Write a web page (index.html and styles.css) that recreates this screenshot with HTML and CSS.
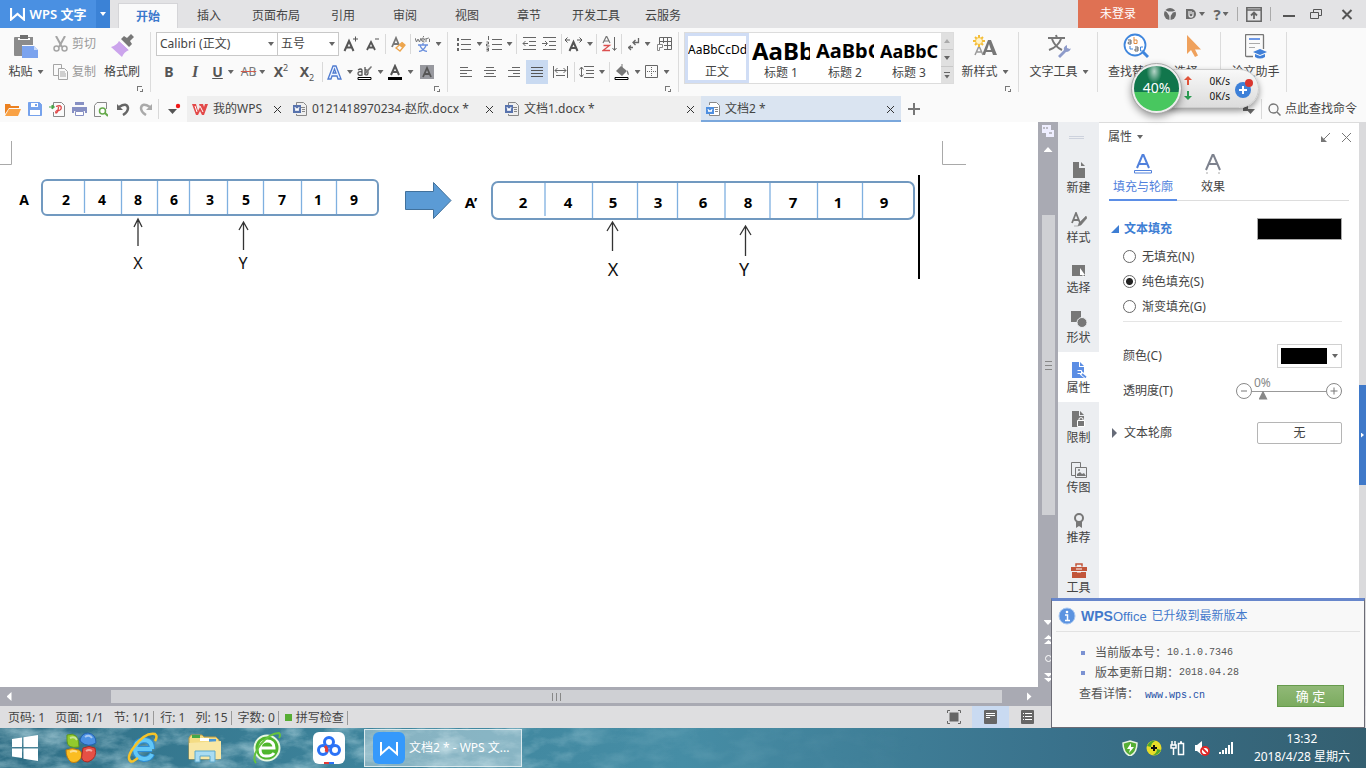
FILE: index.html
```html
<!DOCTYPE html>
<html lang="zh-CN">
<head>
<meta charset="utf-8">
<title>文档2 * - WPS 文字</title>
<link rel="stylesheet" href="styles.css">
</head>
<body>
<header class="titlebar">
  <button class="brand"><svg width="15" height="13" viewBox="0 0 15 13"><path d="M1 0v11.500L7.500 6l6.500 5.500V0" fill="none" stroke="#fff" stroke-width="2.200"/></svg>WPS 文字</button>
  <button class="brand-more" aria-label="菜单"><i class="caret light"></i></button>
  <nav class="menu">
    <a class="active" href="#">开始</a><a href="#">插入</a><a href="#">页面布局</a><a href="#">引用</a><a href="#">审阅</a><a href="#">视图</a><a href="#">章节</a><a href="#">开发工具</a><a href="#">云服务</a>
  </nav>
  <button class="login">未登录</button>
  <div class="window-tools">
    <button class="w24" aria-label="皮肤"><svg width="14" height="14" viewBox="0 0 14 14"><circle cx="7" cy="7" r="6" fill="#6b6b6b"/><path d="M3.500 4.500h7L7 10z" fill="#e3e3e5"/><path d="M1 3l4 2M13 4l-3 1M7 13V9" stroke="#e3e3e5" stroke-width="1.200"/></svg></button>
    <button class="w26" aria-label="文档"><svg width="12" height="12" viewBox="0 0 12 12"><path d="M1 1h5a5 5 0 0 1 0 10H1z" fill="#6b6b6b"/><path d="M4 3v4q0 2 2 2t2-2V4M6 6V3" stroke="#e3e3e5" stroke-width="1.300" fill="none"/></svg><i class="caret"></i></button>
    <button class="w26" aria-label="帮助"><b class="question">?</b><i class="caret"></i></button>
    <i class="vr short"></i>
    <button class="w26" aria-label="折叠"><svg width="16" height="15" viewBox="0 0 16 15"><path d="M.8.800h14.400v13.400H.8zM1 3h14" fill="none" stroke="#666" stroke-width="1.500"/><path d="M8 12V6M5 8.500L8 5.500l3 3" fill="none" stroke="#666" stroke-width="1.800"/></svg></button>
    <i class="vr short"></i>
    <button class="w30" aria-label="最小化"><svg width="12" height="12" viewBox="0 0 12 12"><path d="M0 8h12" stroke="#555" stroke-width="2"/></svg></button>
    <button class="w24" aria-label="还原"><svg width="12" height="10" viewBox="0 0 12 10"><path d="M.5 3.500h8v6h-8zM3.500 3V.5h8v6H9" fill="none" stroke="#555"/></svg></button>
    <button class="close" aria-label="关闭"><svg width="12" height="11" viewBox="0 0 12 11"><path d="M1.500 1l9 9m0-9l-9 9" stroke="#555" stroke-width="2"/></svg></button>
  </div>
</header>

<section class="ribbon" aria-label="开始">
  <div class="group clipboard">
    <div class="cols">
      <button class="big paste"><span><svg width="26" height="24" viewBox="0 0 26 24"><path d="M2 3h5V1h8v2h5v8H9v11H2q-1 0-1-1V4q0-1 1-1z" fill="#8b8b8b"/><path d="M5 4h12v2H5z" fill="#fafafa"/><path d="M7 1h8v4H7z" fill="#707070"/><path d="M9 12h12l4 4v8H9z" fill="#7ba3ee"/><path d="M21 12v4h4" fill="#c7dafa"/></svg></span><em>粘贴<i class="caret"></i></em></button>
      <div class="stack">
        <button class="dim"><svg width="15" height="16" viewBox="0 0 15 16" fill="none" stroke="#a5a5a5"><path d="M3 0l6 11M12 0L6 11" stroke-width="2"/><circle cx="3.500" cy="12.500" r="2.500" stroke-width="1.500"/><circle cx="11.500" cy="12.500" r="2.500" stroke-width="1.500"/></svg>剪切</button>
        <button class="dim"><svg width="15" height="16" viewBox="0 0 15 16" fill="#fafafa" stroke="#a5a5a5"><path d="M.5.500h8v11h-8z"/><path d="M5.500 4.500h6l3 3v8h-9z"/><path d="M7 8h5m-5 2h6m-6 2h6"/></svg>复制</button>
      </div>
      <button class="big painter"><span><svg width="24" height="24" viewBox="0 0 24 24"><path d="M11 5l3-3 3 2 4-4 3 3-4 4 2 3-3 3z" fill="#777"/><path d="M9 7l10 9q-5 2-7 7L1 13q6-2 8-6z" fill="#cba4ec"/><path d="M9.500 6.500l10 9.500" stroke="#fff"/></svg></span><em>格式刷</em></button>
    </div>
    <button class="launcher" aria-label="剪贴板设置"></button>
  </div>

  <div class="group font">
    <div class="row">
      <label class="drop family"><select aria-label="字体"><option>Calibri (正文)</option></select></label><label class="drop size"><select aria-label="字号"><option>五号</option></select></label>
      <button class="w24" aria-label="增大字号"><svg width="16" height="16" viewBox="0 0 16 16"><path d="M1.500 15L6 5l4.500 10M3 11.500h6" fill="none" stroke="#555" stroke-width="2"/><path d="M10 3h5M12.500.5v5" stroke="#555"/></svg></button>
      <button class="w20" aria-label="减小字号"><svg width="16" height="16" viewBox="0 0 16 16"><path d="M2 14l4-8 4 8M3.500 11.500h5" fill="none" stroke="#555" stroke-width="1.800"/><path d="M10 3h4" stroke="#555"/></svg></button>
      <i class="vr"></i>
      <button class="w20" aria-label="清除格式"><svg width="15" height="16" viewBox="0 0 15 16"><path d="M1 11l4-9 3 7M3 8h4" fill="none" stroke="#777" stroke-width="1.800"/><path d="M11 6.500l3 2.500-5 6-4-3z" fill="#fafafa" stroke="#eda54d" stroke-width="1.300"/><path d="M11 6.500l3 2.500-2.500 3-3.500-2.500z" fill="#eda54d"/></svg></button>
      <i class="vr"></i>
      <button class="w30" aria-label="拼音指南"><svg width="16" height="16" viewBox="0 0 16 16"><path d="M0 2l1.500 4L3 3l1.500 3L6 2M6.500 4h3q0-2-1.500-2T6.500 4t3 2M11 6V2m0 1q3-2 3.500 0v3M8 1l1-1" fill="none" stroke="#777"/><path d="M3 9h10M8 7v2M5 9.500q2 5 7 6M11 9.500q-2 5-7 6" fill="none" stroke="#6a8fdd" stroke-width="1.300"/></svg><i class="caret"></i></button>
    </div>
    <div class="row">
      <button class="w26 letter" aria-label="加粗"><b>B</b></button>
      <button class="w26 letter serif" aria-label="倾斜"><b><i>I</i></b></button>
      <button class="w30 letter" aria-label="下划线"><b><u>U</u></b><i class="caret"></i></button>
      <button class="w30 strike" aria-label="删除线"><s>AB</s><i class="caret"></i></button>
      <button class="w26 letter" aria-label="上标"><b>X</b><sup>2</sup></button>
      <button class="w26 letter" aria-label="下标"><b>X</b><sub>2</sub></button>
      <i class="vr"></i>
      <button class="w30" aria-label="文字效果"><svg width="15" height="15" viewBox="0 0 15 15"><path d="M1 14L6 1h3l5 13h-3l-1-3H5l-1 3zM6 8h3L7.500 4z" fill="#eef4ff" stroke="#4f7bd0" stroke-width="1.300"/></svg><i class="caret"></i></button>
      <button class="w30" aria-label="突出显示"><svg width="16" height="15" viewBox="0 0 16 15"><path d="M1 5q3-2 4 0v5q-4 1-4-1.500T5 7M8 2v8m0-5q3-1 3 2.500T8 9.500" fill="none" stroke="#555" stroke-width="1.300"/><path d="M15 2L9 9l-2 1 1-3 6-6z" fill="#777"/><path d="M1 12.500h13v2H1z" fill="#fff" stroke="#000"/></svg><i class="caret"></i></button>
      <button class="w30" aria-label="字体颜色"><svg width="16" height="16" viewBox="0 0 16 16"><path d="M4 11l4-9 4 9M5.500 8h5" fill="none" stroke="#555" stroke-width="2"/><path d="M1 13h14v3H1z"/></svg><i class="caret"></i></button>
      <button class="w24" aria-label="字符底纹"><svg width="14" height="14" viewBox="0 0 14 14"><path d="M0 0h14v14H0z" fill="#98999f"/><path d="M3 12l4-9 4 9M4.500 9h5" fill="none" stroke="#555" stroke-width="1.800"/></svg></button>
    </div>
    <button class="launcher" aria-label="字体设置"></button>
  </div>

  <div class="group para">
    <div class="row">
      <button class="w30" aria-label="项目符号"><svg width="16" height="14" viewBox="0 0 16 14"><path d="M5 2.500h10M5 7.500h10M5 12.500h10" stroke="#666"/><path d="M1 1h2v3H1zM1 6h2v3H1zM1 11h2v3H1z" fill="#666"/></svg><i class="caret"></i></button>
      <button class="w30" aria-label="编号"><svg width="16" height="16" viewBox="0 0 16 16"><path d="M6 3.500h10M6 8.500h10M6 13.500h10M2.500 0v4M.5 6h2v2h-2v2h3M.5 12h2v3h-2m0-1.500h2" stroke="#666" fill="none"/></svg><i class="caret"></i></button>
      <i class="vr"></i>
      <button class="w20" aria-label="减少缩进"><svg width="14" height="14" viewBox="0 0 14 14"><path d="M1 .5h13M7 4.500h7M7 8.500h7M1 12.500h13M1 6.500h5M3.500 4L1 6.500 3.500 9" fill="none" stroke="#666"/></svg></button>
      <button class="w20" aria-label="增加缩进"><svg width="14" height="14" viewBox="0 0 14 14"><path d="M1 .5h13M7 4.500h7M7 8.500h7M1 12.500h13M0 6.500h5M3 4l2.500 2.500L3 9" fill="none" stroke="#666"/></svg></button>
      <i class="vr"></i>
      <button class="w30" aria-label="中文版式"><svg width="17" height="15" viewBox="0 0 17 15"><path d="M4.500 14L8.500 5l4 9M6 11h5" fill="none" stroke="#555" stroke-width="2"/><path d="M0 3h5M12 3h5M2.500.5L0 3l2.500 2.500M14.500.5L17 3l-2.500 2.500" fill="none" stroke="#555"/></svg><i class="caret"></i></button>
      <i class="vr"></i>
      <button class="w20" aria-label="排序"><svg width="15" height="16" viewBox="0 0 15 16"><path d="M1 7l3.500-7L8 7M2.500 5h4" fill="none" stroke="#777" stroke-width="1.200"/><path d="M1.500 9.500h6L1 14.500h7" fill="none" stroke="#dc5050" stroke-width="1.300"/><path d="M12.500 1v13M10.500 12l2 2.500 2-2.500" fill="none" stroke="#666"/></svg></button>
      <i class="vr"></i>
      <button class="w30" aria-label="显示段落标记"><svg width="12" height="13" viewBox="0 0 12 13"><path d="M10.500 0v4.500H5M7.500 2L5 4.500 7.500 7M5 9.500H1M3 7.500l-2.500 2L3 12" fill="none" stroke="#666" stroke-width="1.300"/></svg><i class="caret"></i></button>
      <button class="w20" aria-label="插入表格"><svg width="15" height="14" viewBox="0 0 15 14"><path d="M2.500 7V.5h12v12H7M2.500 4.500h12M7 8.500h7.500M6.500.5V6M10.500.5v12" fill="none" stroke="#666"/><path d="M.5 13.500v-6h5v3h-3v3z" fill="#fff" stroke="#888"/></svg></button>
    </div>
    <div class="row">
      <button class="w24" aria-label="左对齐"><svg width="12" height="12" viewBox="0 0 12 12"><path d="M0 1.500h8M0 4.500h12M0 7.500h7M0 10.500h12" stroke="#666"/></svg></button>
      <button class="w24" aria-label="居中"><svg width="12" height="12" viewBox="0 0 12 12"><path d="M2 1.500h8M0 4.500h12M2 7.500h8M0 10.500h12" stroke="#666"/></svg></button>
      <button class="w24" aria-label="右对齐"><svg width="12" height="12" viewBox="0 0 12 12"><path d="M4 1.500h8M0 4.500h12M5 7.500h7M0 10.500h12" stroke="#666"/></svg></button>
      <button class="w22 on" aria-label="两端对齐"><svg width="12" height="12" viewBox="0 0 12 12"><path d="M0 1.500h12M0 4.500h12M0 7.500h12M0 10.500h12" stroke="#555"/></svg></button>
      <button class="w24" aria-label="分散对齐"><svg width="15" height="12" viewBox="0 0 15 12"><path d="M.5 0v12M14.500 0v12M2 4.500h11M4.500 2L2 4.500 4.500 7M10.500 2L13 4.500 10.500 7M3 9.500h9" fill="none" stroke="#666"/></svg></button>
      <i class="vr"></i>
      <button class="w30" aria-label="行距"><svg width="15" height="14" viewBox="0 0 15 14"><path d="M5 1.500h10M7 5.500h8M7 8.500h8M5 12.500h10M2.500 2v10M.5 4.500L2.500 2l2 2.500M.5 9.500l2 2.500 2-2.500" fill="none" stroke="#666"/></svg><i class="caret"></i></button>
      <i class="vr"></i>
      <button class="w30" aria-label="底纹颜色"><svg width="16" height="16" viewBox="0 0 16 16"><path d="M7 2l6 5-5 5-6-5z" fill="#777"/><path d="M8 0v5" stroke="#777"/><path d="M13 6q2 2 2 5-2 0-2-3z" fill="#777"/><path d="M1 13.500h13v2H1z" fill="#fff" stroke="#000"/></svg><i class="caret"></i></button>
      <button class="w30" aria-label="边框"><svg width="14" height="14" viewBox="0 0 14 14"><path d="M.5.500h12v12H.5z" fill="none" stroke="#666"/><path d="M6.500 2v9M2 6.500h9" stroke="#666" stroke-dasharray="1 1"/></svg><i class="caret"></i></button>
    </div>
    <button class="launcher" aria-label="段落设置"></button>
  </div>

  <div class="group styles">
    <div class="cols">
      <div class="gallery">
        <button class="style on"><span class="s0">AaBbCcDd</span><em>正文</em></button>
        <button class="style"><span class="s1">AaBb</span><em>标题 1</em></button>
        <button class="style"><span class="s2">AaBbC</span><em>标题 2</em></button>
        <button class="style"><span class="s3">AaBbC</span><em>标题 3</em></button>
        <div class="steps"><button aria-label="向上"><i class="caret up"></i></button><button aria-label="向下"><i class="caret"></i></button><button aria-label="更多"><i class="bar"></i><i class="caret"></i></button></div>
      </div>
      <button class="big newstyle"><span><svg width="24" height="22" viewBox="0 0 24 22"><path d="M9 20l6-15h3l6 15h-4l-1-3h-6l-1 3zm5-5h4l-2-6z" fill="#777"/><path d="M2 20l4-9 4 9M4 17h4" fill="none" stroke="#999" stroke-width="1.500"/><path d="M6 0v12M0 6h12M2 2l8 8M10 2l-8 8" stroke="#f5bd35" stroke-width="2"/><circle cx="6" cy="6" r="3.500" fill="#fff3c9" stroke="#f5bd35"/></svg></span><em>新样式<i class="caret"></i></em></button>
    </div>
    <button class="launcher" aria-label="样式设置"></button>
  </div>

  <div class="group texttool">
    <button class="big"><span><svg width="24" height="24" viewBox="0 0 24 24"><path d="M1 4h17M9 1l1 3M5 5q3 8 10 11M14 5q-3 8-12 11" fill="none" stroke="#777" stroke-width="2"/><path d="M11 22l6-6q-1-3 3-5v3l3 1 1-1q-1 4-5 4l-6 6z" fill="#8e9bca"/></svg></span><em>文字工具<i class="caret"></i></em></button>
  </div>
  <div class="group search">
    <button class="big find"><span><svg width="26" height="26" viewBox="0 0 26 26"><circle cx="12" cy="12" r="10.500" fill="#fff" stroke="#3f86dd" stroke-width="1.800"/><path d="M20 19l5 5" stroke="#3f86dd" stroke-width="3"/><path d="M5 7h3v4H5.500q-1-1 0-2H8" fill="none" stroke="#666"/><path d="M11 4v6.500h3V7h-3" fill="none" stroke="#e08a3c"/><path d="M7 13v3h3" fill="none" stroke="#3f86dd"/><path d="M12 14h3v4h-3v-2h3" fill="none" stroke="#666"/><path d="M20 14h-2.500v4H20" fill="none" stroke="#3f86dd"/></svg></span><em>查找替换<i class="caret"></i></em></button>
    <button class="big choose"><span><svg width="16" height="24" viewBox="0 0 16 24"><path d="M1 1v19l4-4 4 7 3-1.500-3-6h6z" fill="#efa15c"/></svg></span><em>选择<i class="caret"></i></em></button>
  </div>
  <div class="group paper">
    <button class="big"><span><svg width="22" height="25" viewBox="0 0 22 25"><path d="M18.500 15V1.500q0-1-1-1h-16q-1 0-1 1v20q0 1 1 1H8" fill="none" stroke="#777" stroke-width="1.300"/><path d="M4 5h11" stroke="#6d98e6" stroke-width="2"/><path d="M4 9.500h11M4 13.500h6" stroke="#aaa"/><path d="M8 18l7-3 7 3-7 3z" fill="#3f7fd8"/><path d="M10 20v3q5 3 10 0v-3l-5 2z" fill="#3f7fd8"/></svg></span><em>论文助手</em></button>
  </div>
</section>

<section class="docbar">
  <div class="quick">
    <button aria-label="打开"><svg width="16" height="13" viewBox="0 0 16 13"><path d="M0 11V1h5l1 2h8v2H4z" fill="#ec8120"/><path d="M4 6h12l-3 7H0z" fill="#f9a245"/></svg></button>
    <button aria-label="保存"><svg width="14" height="14" viewBox="0 0 14 14"><path d="M.5.500h11l2 2v11H.5z" fill="#76a2ec" stroke="#76a2ec"/><path d="M3 1h7v4H3zM2 8h10v5H2z" fill="#fff"/><path d="M7 2h2v2H7z" fill="#76a2ec"/></svg></button>
    <button aria-label="输出为PDF"><svg width="16" height="15" viewBox="0 0 16 15"><path d="M4.500 5V.5h8l3 3v11h-11V10" fill="none" stroke="#888"/><path d="M7 4.500q4-1.500 5 0 1 3-2 4H8q-2 1-1 2.500 2 0 2.500-6" fill="none" stroke="#e04848" stroke-width="1.300"/><path d="M0 5h3M3 3l2.500 2L3 7z" stroke="#47a447" fill="#47a447"/></svg></button>
    <button aria-label="打印"><svg width="15" height="14" viewBox="0 0 15 14"><path d="M3 0h9v3H3zM0 5h15v6h-2V9H2v2H0z" fill="#8790c3"/><path d="M3.500 9.500h8v4h-8z" fill="#fff" stroke="#8790c3"/></svg></button>
    <button aria-label="打印预览"><svg width="14" height="15" viewBox="0 0 14 15"><path d="M12.500 7V.5H3l-2.500 3v11H7" fill="none" stroke="#888"/><circle cx="8.500" cy="9" r="3" fill="#fff" stroke="#65a94b" stroke-width="1.500"/><path d="M11 11l3 3" stroke="#65a94b" stroke-width="2"/></svg></button>
    <button aria-label="撤销"><svg width="13" height="13" viewBox="0 0 13 13"><path d="M2 4q8-5 9 1 0 4-5 7" fill="none" stroke="#666" stroke-width="2.500"/><path d="M0 1v6h6z" fill="#666"/></svg></button>
    <button aria-label="恢复"><svg width="13" height="13" viewBox="0 0 13 13"><path d="M11 4Q3-1 2 5q0 4 5 7" fill="none" stroke="#aaa" stroke-width="2.500"/><path d="M13 1v6H7z" fill="#aaa"/></svg></button>
    <i class="vr"></i>
    <button class="more" aria-label="更多命令"><svg width="14" height="13" viewBox="0 0 14 13"><path d="M1 6h9l-4.500 5z" fill="#555"/><circle cx="11" cy="3" r="2.200" fill="#f01818"/></svg></button>
  </div>
  <div class="doctabs">
    <div class="tab home"><svg width="16" height="13" viewBox="0 0 16 13"><path d="M0 1h4l2 7 2-4-1-3h4l1 3 1-3h3l-4 11h-2L8 8l-2 4H4z" fill="#e34949"/><path d="M3 3l2 6M8 3l3 6" stroke="#fff"/></svg><span>我的WPS</span><button aria-label="关闭"><svg width="9" height="9" viewBox="0 0 9 9"><path d="M1 1l7 7m0-7l-7 7" stroke="#333"/></svg></button></div>
    <div class="tab wide"><svg width="14" height="14" viewBox="0 0 14 14"><path d="M3.500 3V.5h7l3 3v10h-10V12M8 5.500h4M9 7.500h3M9 9.500h3" fill="none" stroke="#888"/><path d="M0 3h8v8H0z" fill="#5873ad"/><path d="M2 5l1 4 1-3 1 3 1-4" fill="none" stroke="#fff"/></svg><span>0121418970234-赵欣.docx *</span><button aria-label="关闭"><svg width="9" height="9" viewBox="0 0 9 9"><path d="M1 1l7 7m0-7l-7 7" stroke="#333"/></svg></button></div>
    <div class="tab"><svg width="14" height="14" viewBox="0 0 14 14"><path d="M3.500 3V.5h7l3 3v10h-10V12M8 5.500h4M9 7.500h3M9 9.500h3" fill="none" stroke="#888"/><path d="M0 3h8v8H0z" fill="#5873ad"/><path d="M2 5l1 4 1-3 1 3 1-4" fill="none" stroke="#fff"/></svg><span>文档1.docx *</span><button aria-label="关闭"><svg width="9" height="9" viewBox="0 0 9 9"><path d="M1 1l7 7m0-7l-7 7" stroke="#333"/></svg></button></div>
    <div class="tab current"><svg width="14" height="14" viewBox="0 0 14 14"><path d="M3.500 3V.5h7l3 3v10h-10V12M8 5.500h4M9 7.500h3M9 9.500h3" fill="#fff" stroke="#888"/><path d="M0 5h8v7H0z" fill="#4f8fe0"/><path d="M2 7l1 3 1-2 1 2 1-3" fill="none" stroke="#fff"/></svg><span>文档2 *</span><button aria-label="关闭"><svg width="9" height="9" viewBox="0 0 9 9"><path d="M1 1l7 7m0-7l-7 7" stroke="#333"/></svg></button></div>
    <button class="plus" aria-label="新建"><svg width="12" height="12" viewBox="0 0 12 12"><path d="M6 0v12M0 6h12" stroke="#777" stroke-width="2"/></svg></button>
  </div>
  <div class="command">
    <button aria-label="反馈"><svg width="12" height="10" viewBox="0 0 12 10"><path d="M0 4l5-3v6H0zM3 5h9L7.500 10z" fill="#666"/></svg></button>
    <i class="vr"></i>
    <a href="#"><svg width="13" height="13" viewBox="0 0 13 13"><circle cx="5.500" cy="5.500" r="4.500" fill="none" stroke="#777" stroke-width="1.300"/><path d="M9 9l3.500 3.500" stroke="#777" stroke-width="1.500"/></svg>点此查找命令</a>
  </div>
</section>

<main class="work">
  <div class="editor">
    <article class="page">
      <svg class="diagram" width="980" height="180" viewBox="0 122 980 180">
        <path d="M11.500 141v23.500H0M942.500 141v23.500H966" fill="none" stroke="#a9a9a9"/>
        <g fill="none" stroke="#7199c0" stroke-width="2"><rect x="42" y="180" width="336" height="35" rx="5"/><rect x="492" y="182" width="422" height="37" rx="6"/></g>
        <path d="M84.500 181v32M121.500 181v33M157.500 181v33M189.500 181v33M227.500 181v33M263.500 181v33M301.500 181v33M336.500 181v33M545 183v33M592.500 183v35M637.500 183v35M677.500 183v35M725 183v35M770 183v35M817.500 183v35M862.500 183v35" stroke="#7fb0e0" stroke-width="1.300"/>
        <path d="M405.500 191.500h28v-9l17.500 18-17.500 18v-9h-28z" fill="#5b9bd5" stroke="#41719c"/>
        <g class="cell"><text x="24" y="205">A</text><text x="66" y="205">2</text><text x="102" y="205">4</text><text x="138" y="205">8</text><text x="174" y="205">6</text><text x="210" y="205">3</text><text x="246" y="205">5</text><text x="282" y="205">7</text><text x="318" y="205">1</text><text x="354" y="205">9</text></g>
        <g class="cell large"><text x="471" y="208">A’</text><text x="523" y="208">2</text><text x="568" y="208">4</text><text x="613" y="208">5</text><text x="658" y="208">3</text><text x="703" y="208">6</text><text x="748" y="208">8</text><text x="793" y="208">7</text><text x="838" y="208">1</text><text x="884" y="208">9</text></g>
        <path d="M138 219v27M134 227l4-8 4 8M243.500 222v28M239 230l4.500-8 4.500 8M612.500 222v29M607 231l5.500-9 5.500 9M745.500 226v30M740 235l5.500-9 5.500 9" fill="none" stroke="#333" stroke-width="1.300"/>
        <g class="pointer"><text x="138" y="269">X</text><text x="243" y="269">Y</text></g>
        <g class="pointer large"><text x="613" y="276">X</text><text x="744" y="276">Y</text></g>
        <path d="M919 175v104" stroke="#000" stroke-width="2"/>
      </svg>
    </article>
    <div class="hscroll"><button aria-label="向左"><i class="tri left"></i></button><div class="track"><i class="thumb"><b></b><b></b><b></b></i></div><button aria-label="向右"><i class="tri right"></i></button></div>
  </div>
  <div class="vscroll">
    <svg width="12" height="12" viewBox="0 0 12 12"><path d="M0 0h9v5h3v7H4V8H0z" fill="#eef"/><path d="M2 2v2M5 2v2M7 8h3" stroke="#888"/></svg>
    <i class="tri up"></i>
    <div class="track"><i class="thumb"><b></b><b></b><b></b></i></div>
    <i class="tri down"></i>
    <svg width="9" height="9" viewBox="0 0 9 9"><path d="M0 4l4.500-4L9 4zM0 9l4.500-4L9 9z" fill="#fff"/></svg>
    <svg width="9" height="9" viewBox="0 0 9 9"><circle cx="4.500" cy="4.500" r="3" fill="none" stroke="#fff"/></svg>
    <svg width="9" height="9" viewBox="0 0 9 9"><path d="M0 0h9L4.500 4zM0 5h9L4.500 9z" fill="#fff"/></svg>
  </div>
  <nav class="side">
    <i class="grip"></i>
    <button><svg width="14" height="16" viewBox="0 0 14 16"><path d="M1 0h6v6h6v10H1zM9 0l4 4H9z" fill="#777"/></svg>新建</button>
    <button><svg width="16" height="16" viewBox="0 0 16 16"><path d="M1 11L5 1l4 10M2.500 8h5" fill="none" stroke="#777" stroke-width="1.800"/><path d="M15 4l-7 7-1 3 3-1 6-7zM3 14h4" fill="#777" stroke="#777" stroke-width=".5"/></svg>样式</button>
    <button><svg width="14" height="16" viewBox="0 0 14 16"><path d="M0 3h13v11H0z" fill="#777"/><path d="M8 6v7l5 0z" fill="#fff"/><path d="M10 12l2 3" stroke="#fff"/></svg>选择</button>
    <button><svg width="16" height="17" viewBox="0 0 16 17"><path d="M0 0h10v7q-4 1-4 4H0z" fill="#777"/><circle cx="11" cy="11.500" r="5" fill="#777" stroke="#eceef1"/></svg>形状</button>
    <button class="active"><svg width="16" height="16" viewBox="0 0 16 16"><path d="M1 0h7v5h5v11H1z" fill="#5c8ee4"/><path d="M9 0l4 4H9z" fill="#5c8ee4"/><path d="M10 11l5 4" stroke="#fff" stroke-width="4"/><path d="M6.500 8.500h4v3h-4M10 11l5 4.500" stroke="#fff" fill="none"/><path d="M11 12l4 3.500" stroke="#5c8ee4" stroke-width="1.800"/></svg>属性</button>
    <button><svg width="15" height="17" viewBox="0 0 15 17"><path d="M1 0h7v5h5v11H1zM9 0l4 4H9z" fill="#777"/><path d="M6.500 9.500h7v6h-7zM8 9V7.500q2-2 4 0V9" fill="#777" stroke="#fff"/></svg>限制</button>
    <button><svg width="16" height="16" viewBox="0 0 16 16"><path d="M4 13.500H.5V.5h9V5M4.500 5.500h11v10h-11z" fill="none" stroke="#777"/><path d="M6 14v-2l3-2 2 2 2-1 2 3z" fill="#777"/><circle cx="8" cy="8" r="1" fill="#777"/></svg>传图</button>
    <button><svg width="12" height="15" viewBox="0 0 12 15"><circle cx="6" cy="5" r="4" fill="none" stroke="#777" stroke-width="2"/><path d="M3 9v6l3-2 3 2V9" fill="#777"/></svg>推荐</button>
    <button><svg width="16" height="15" viewBox="0 0 16 15"><path d="M5 3.500V1h6v2.500" fill="none" stroke="#c2553a" stroke-width="1.500"/><path d="M0 4h16v4H0zM1 9h14v6H1z" fill="#c2553a"/><path d="M5 6h6M6 9h4" stroke="#fff"/></svg>工具</button>
  </nav>
  <aside class="panel">
    <header><span>属性<i class="caret"></i></span><div><svg width="11" height="11" viewBox="0 0 11 11"><path d="M10 1L3 8" stroke="#777"/><path d="M1 4v6h6z" fill="#777"/></svg><svg width="11" height="11" viewBox="0 0 11 11"><path d="M1 1l9 9m0-9l-9 9" stroke="#777"/></svg></div></header>
    <div class="ptabs">
      <a class="active" href="#"><svg width="20" height="20" viewBox="0 0 20 20"><path d="M4 14L9.500 1h1L16 14M6 10h8" fill="none" stroke="#5181dc" stroke-width="2"/><path d="M1.500 16.500h17v2.500h-17z" fill="#fff" stroke="#5181dc"/></svg>填充与轮廓</a>
      <a href="#"><svg width="20" height="20" viewBox="0 0 20 20"><path d="M3 16L9.500 1h1L17 16M6 10h8" fill="none" stroke="#7d828e" stroke-width="2"/><path d="M3 19h2M15 19h2" stroke="#aaa"/></svg>效果</a>
    </div>
    <section class="fill">
      <div class="line heading"><svg width="8" height="8" viewBox="0 0 8 8"><path d="M8 0v8H0z" fill="#3e7ed4"/></svg><b>文本填充</b><button class="swatch" aria-label="填充颜色"></button></div>
      <label class="radio"><input type="radio" name="fill">无填充(N)</label>
      <label class="radio"><input type="radio" name="fill" checked>纯色填充(S)</label>
      <label class="radio"><input type="radio" name="fill">渐变填充(G)</label>
      <hr>
      <div class="line indent color"><span>颜色(C)</span><button class="picker" aria-label="颜色"><b></b><i class="caret"></i></button></div>
      <div class="line indent"><label for="alpha">透明度(T)</label><div class="slider"><button aria-label="减少"><svg width="16" height="16" viewBox="0 0 16 16"><circle cx="8" cy="8" r="7.500" fill="#fff" stroke="#888"/><path d="M5 8h6" stroke="#777"/></svg></button><span class="range"><output>0%</output><input id="alpha" type="range" min="0" max="100" value="10"></span><button aria-label="增加"><svg width="16" height="16" viewBox="0 0 16 16"><circle cx="8" cy="8" r="7.500" fill="#fff" stroke="#888"/><path d="M4.500 8h7M8 4.500v7" stroke="#777"/></svg></button></div></div>
      <div class="line outline"><svg width="8" height="10" viewBox="0 0 8 10"><path d="M1 0l5 5-5 5z" fill="#666b78"/></svg><span>文本轮廓</span><button class="none">无</button></div>
    </section>
  </aside>
  <div class="edge"><button aria-label="展开"><i class="tri right small"></i></button></div>
</main>

<footer class="status">
  <div class="info"><span>页码: 1</span><span>页面: 1/1</span><span class="cut">节: 1/1</span><span>行: 1</span><span class="cut">列: 15</span><span class="cut">字数: 0</span><span class="cut"><i class="ok"></i>拼写检查</span></div>
  <div class="views">
    <button aria-label="全屏"><svg width="14" height="14" viewBox="0 0 14 14"><path d="M2.500 2.500h9v9h-9z" fill="#666"/><path d="M.5 3V.5H3M11 .5h2.500V3M13.500 11v2.500H11M3 13.500H.5V11" fill="none" stroke="#666"/></svg></button>
    <button class="on" aria-label="页面视图"><svg width="13" height="14" viewBox="0 0 13 14"><rect width="13" height="14" rx="1" fill="#666"/><path d="M2 3.500h9M2 5.500h9M2 7.500h4" stroke="#fff"/></svg></button>
    <button aria-label="大纲"><svg width="13" height="14" viewBox="0 0 13 14"><rect width="13" height="14" rx="1" fill="#666"/><path d="M2 3.500h1M4 3.500h7M2 6.500h1M4 6.500h7M2 9.500h1M4 9.500h7" stroke="#fff"/></svg></button>
  </div>
</footer>

<footer class="taskbar">
  <svg class="sky" width="100%" height="40" aria-hidden="true"><filter id="cloud" x="0" y="0" width="100%" height="100%"><feTurbulence type="fractalNoise" baseFrequency=".03 .06" numOctaves="5" seed="8"/><feColorMatrix values="0 0 0 0 .55  0 0 0 0 .77  0 0 0 0 .83  2.200 0 0 0 -.85"/></filter><linearGradient id="fade"><stop offset="0" stop-color="#fff"/><stop offset=".35" stop-color="#fff"/><stop offset=".45" stop-color="#444"/><stop offset=".68" stop-color="#000"/></linearGradient><mask id="m"><rect width="100%" height="40" fill="url(#fade)"/></mask><g mask="url(#m)"><rect width="100%" height="40" filter="url(#cloud)" opacity=".6"/></g></svg>
  <div class="apps">
    <button aria-label="开始"><svg width="26" height="26" viewBox="0 0 26 26"><path d="M0 4l10-1.500V12H0zM11.500 2.300L26 0v12H11.500zM0 13.500h10V23L0 21.500zM11.500 13.500H26V26l-14.500-2.300z" fill="#fff"/></svg></button>
    <button aria-label="软件管家"><svg width="32" height="32" viewBox="0 0 32 32"><path d="M2 3q12-4 12 12-12 2-12-6z" fill="#92ca2c" stroke="#5d9622"/><path d="M15 8q2-7 8-7 8 1 8 10-8 5-15-1z" fill="#4b91e4" stroke="#2461ae"/><path d="M1 18q6-3 13 0 4 2 2 8-4 6-10 4-5-4-5-12z" fill="#fbbd21" stroke="#bd7b12"/><path d="M18 16q6-3 12 0 3 10-7 14-8 0-6-8z" fill="#e65045" stroke="#a72923"/><path d="M5 6q5-2 7 2M20 5q4-3 7 1M5 20q4-2 7 0M21 19q3-2 6 0" fill="none" stroke="#fff" stroke-opacity=".5" stroke-width="2"/></svg></button>
    <button aria-label="Internet Explorer"><svg width="32" height="32" viewBox="0 0 32 32"><path d="M25 17H9M25 17q0-9-8-9-9 1-9 10 1 8 9 9 6 0 8-5" fill="none" stroke="#2d8ed6" stroke-width="6"/><path d="M25 17H9M25 17q0-9-8-9-9 1-9 10 1 8 9 9 6 0 8-5" fill="none" stroke="#62c7f6" stroke-width="4"/><path d="M5 30Q-2 27 7 15 18 0 28 2q3 2 0 7M5 30l6-4" fill="none" stroke="#f6c329" stroke-width="2.500"/></svg></button>
    <button aria-label="资源管理器"><svg width="34" height="30" viewBox="0 0 34 30"><path d="M1 5l2-3h11l2 2h12l3 3v19H1z" fill="#f4dc83" stroke="#b89a4a"/><path d="M4 2h8v3H4z" fill="#43a847"/><path d="M12 5h9v3h-9z" fill="#fff"/><path d="M21 6h7v3h-7z" fill="#4b98d7"/><path d="M1 10l32-2v18H1z" fill="#f8e7a4"/><path d="M7 29V18h20v11h-5v-6H12v6z" fill="#a9dcf2" stroke="#5da8cb"/></svg></button>
    <button aria-label="360浏览器"><svg width="30" height="32" viewBox="0 0 30 32"><circle cx="15" cy="16" r="12.500" fill="#4fb62d" stroke="#e8f8e2" stroke-width="2"/><path d="M9 16h13q0-7-7-7t-7 8 7 7q5 0 7-3" fill="none" stroke="#fff" stroke-width="3"/><path d="M4 31Q-1 25 9 12 18 1 27 1q2 2 0 5" fill="none" stroke="#65c33e" stroke-width="2"/></svg></button>
    <button aria-label="百度网盘"><svg width="32" height="32" viewBox="0 0 32 32"><rect width="32" height="32" rx="6" fill="#fff"/><g fill="none" stroke-width="3"><circle cx="16" cy="10" r="4.500" stroke="#2b72f6"/><circle cx="10" cy="18" r="4.500" stroke="#2b72f6"/><circle cx="22" cy="18" r="4.500" stroke="#2b72f6"/><path d="M12 14q3 3 1 6" stroke="#e53b36"/></g><path d="M11 30h5v2h-5z" fill="#e53b36"/><path d="M16 30h5v2h-5z" fill="#2b72f6"/></svg></button>
    <button class="running"><svg width="32" height="32" viewBox="0 0 32 32"><rect width="32" height="32" rx="6" fill="#3599fb"/><path d="M8 10v12l8-7 8 7V10" fill="none" stroke="#fff" stroke-width="2"/></svg><span>文档2 * - WPS 文...</span></button>
  </div>
  <div class="tray">
    <svg width="16" height="16" viewBox="0 0 16 16"><path d="M8 1l7 2q0 10-7 13Q1 13 1 3z" fill="#56ae35" stroke="#e9f3e3" stroke-width="1.500"/><path d="M9 3L5 9h3l-1 4 5-6H9z" fill="#fff"/></svg>
    <svg width="16" height="16" viewBox="0 0 16 16"><circle cx="8" cy="8" r="7.500" fill="#e7dc28"/><path d="M1 6q3-6 8-5-4 2-4 6zM15 10q-3 6-8 5 4-2 4-6z" fill="#4fa82d"/><path d="M8 5v6M5 8h6" stroke="#111" stroke-width="2"/></svg>
    <svg width="16" height="16" viewBox="0 0 16 16"><path d="M2 1v4M5 1v4M1 5h5v3H1zM3.500 8v7M8.500 3.500h5v11h-5zM10 2h2" fill="none" stroke="#fff" stroke-width="1.500"/></svg>
    <svg width="16" height="16" viewBox="0 0 16 16"><path d="M1 5h2l5-4v14l-5-4H1z" fill="#fff"/><circle cx="11" cy="11" r="4" fill="#fff" stroke="#df2727" stroke-width="1.800"/><path d="M8 8l6 6" stroke="#df2727" stroke-width="1.800"/></svg>
    <svg width="16" height="16" viewBox="0 0 16 16"><path d="M1 12h2v2H1zM4 10h2v4H4zM7 8h2v6H7zM10 5h2v9h-2zM13 2h2v12h-2z" fill="#fff"/></svg>
    <time>13:32<br>2018/4/28 星期六</time>
  </div>
</footer>

<div class="meter">
  <div class="rates"><svg width="8" height="10" viewBox="0 0 8 10"><path d="M4 0l4 4H5v5H3V4H0z" fill="#e2543a"/></svg><span>0K/s</span><svg width="8" height="10" viewBox="0 0 8 10"><path d="M4 9l4-4H5V0H3v5H0z" fill="#2c9c52"/></svg><span>0K/s</span></div>
  <svg width="20" height="20" viewBox="0 0 20 20"><circle cx="9" cy="11" r="8" fill="#3d80d8"/><path d="M9 7v8M5 11h8" stroke="#fff" stroke-width="2"/><circle cx="15" cy="4" r="4" fill="#d93630"/></svg>
  <div class="ball">40%</div>
</div>

<div class="notice" role="dialog" aria-label="WPS Office 已升级到最新版本">
  <header><svg width="18" height="18" viewBox="0 0 18 18"><circle cx="9" cy="9" r="8" fill="#5b93e0" stroke="#a9c8f1"/><circle cx="9" cy="5" r="1.300" fill="#fff"/><path d="M7 8h2.500v5M7 13.500h5" stroke="#fff" stroke-width="1.500" fill="none"/></svg><strong><b>WPS</b>Office</strong><span>已升级到最新版本</span></header>
  <ul><li>当前版本号：<samp>10.1.0.7346</samp></li><li>版本更新日期：<samp>2018.04.28</samp></li></ul>
  <div class="foot"><span>查看详情：<a href="#">www.wps.cn</a></span><button>确 定</button></div>
</div>
</body>
</html>
```

FILE: styles.css
```css
* { box-sizing: border-box; }
body {
  margin: 0;
  min-height: 100vh;
  display: flex;
  flex-direction: column;
  position: relative;
  overflow: hidden;
  background: #fafafa;
  color: #444;
  font: 12px/16px "Noto Sans", "Noto Sans CJK SC", sans-serif;
}
button, select, input { font: inherit; color: inherit; margin: 0; }
button {
  display: flex;
  align-items: center;
  justify-content: center;
  padding: 0;
  border: 0;
  background: none;
  white-space: nowrap;
}
a { color: inherit; text-decoration: none; }
svg { display: block; flex: none; }
em { font-style: normal; }

.caret {
  flex: none;
  width: 6px;
  height: 4px;
  margin-left: 5px;
  background: #666;
  clip-path: polygon(0 0, 100% 0, 50% 100%);
}
.caret.light { background: #fff; margin: 0; }
.caret.up { background: #aaa; clip-path: polygon(0 100%, 100% 100%, 50% 0); }
.vr { flex: none; width: 1px; height: 20px; background: #d9d9d9; margin: 0 2px; }
.vr.short { height: 14px; background: #aaa; margin: 0 3px; }
.w20 { width: 20px; }
.w22 { width: 22px; }
.w24 { width: 24px; }
.w26 { width: 26px; }
.w30 { width: 30px; }

/* Title bar */
.titlebar { display: flex; height: 28px; background: #e3e3e5; }
.brand { width: 96px; gap: 5px; background: #4a90e2; color: #fff; font-weight: 600; font-size: 13px; }
.brand-more { width: 14px; background: #3b82d6; }
.menu { display: flex; align-items: flex-end; margin-left: 8px; flex: 1; }
.menu a { min-width: 62px; height: 25px; padding: 2px 12px 0; line-height: 22px; text-align: center; }
.menu .active { min-width: 60px; background: #fafafa; color: #3a78cc; font-weight: 600; border: 1px solid #d5d5d8; border-width: 1px 1px 0; }
.login { width: 80px; background: #df7153; color: #fff; }
.window-tools { display: flex; align-items: center; width: 208px; }
.window-tools .caret { margin-left: 2px; }
.window-tools .close { flex: 1; }
.question { font-size: 15px; color: #666; }

/* Ribbon */
.ribbon { display: flex; height: 68px; background: #fafafa; }
.group { display: flex; flex-direction: column; margin: 4px 0; border-right: 1px solid #dcdcdc; flex: none; gap: 4px; }
.row { display: flex; align-items: center; height: 24px; }
.row button { height: 24px; }
.row .on { background: #c9daf1; }
.cols { display: flex; height: 52px; }
.big { flex-direction: column; }
.big span { height: 28px; display: flex; align-items: center; justify-content: center; }
.big em { display: flex; align-items: center; height: 24px; }
.launcher { width: 5px; height: 5px; align-self: flex-end; margin-right: 8px; border: 1px solid #777; border-width: 1px 0 0 1px; box-shadow: 2px 2px 0 -1px #777; margin-top: -2px; }
.clipboard { width: 151px; padding-left: 8px; }
.paste { width: 36px; }
.stack { display: flex; flex-direction: column; gap: 4px; padding-left: 9px; width: 58px; }
.stack button { height: 24px; gap: 4px; justify-content: flex-start; }
.dim { color: #999; }
.painter { width: 40px; }
.font { width: 297px; padding-left: 5px; }
.drop { position: relative; height: 24px; border: 1px solid #c8c8c8; background: #fff; }
.drop::after { content: ""; position: absolute; right: 3px; top: 9px; width: 6px; height: 4px; background: #666; clip-path: polygon(0 0, 100% 0, 50% 100%); pointer-events: none; }
.drop select { width: 100%; height: 22px; padding: 0 3px; border: 0; background: none; appearance: none; }
.family { width: 122px; }
.size { width: 61px; border-left: 0; }
.letter { font-size: 14px; color: #555; }
.serif { font-family: "Liberation Serif", serif; font-size: 16px; }
.letter sup, .letter sub { font-size: 9px; line-height: 9px; }
.letter sup { align-self: flex-start; margin-top: 3px; }
.letter sub { align-self: flex-end; margin-bottom: 2px; }
.strike s { color: #777; text-decoration-color: #d25a4c; }
.strike .caret { margin-left: 3px; }
.para { width: 231px; padding-left: 6px; }
.styles { width: 340px; padding-left: 5px; }
.gallery { display: flex; width: 270px; background: #fff; border: 1px solid #dcdcdc; }
.style { flex-direction: column; width: 64px; overflow: hidden; padding: 5px 3px 0; }
.style span { height: 24px; width: 58px; line-height: 24px; overflow: hidden; color: #000; text-align: left; flex: none; }
.style em { height: 20px; line-height: 20px; }
.style.on { border: 3px solid #d0ddf5; padding: 4px 0 0; }
.s0 { font-size: 12px; }
.s1 { font-size: 24px; font-weight: 700; }
.s2 { font-size: 20px; font-weight: 700; }
.s3 { font-size: 18px; font-weight: 700; }
.steps { display: flex; flex-direction: column; flex: 1; gap: 1px; background: #c8c8c8; }
.steps button { flex: 1; background: #e0e0e0; flex-direction: column; gap: 2px; }
.steps .caret { margin: 0; }
.bar { width: 6px; height: 1px; background: #666; }
.newstyle { width: 58px; margin-left: 2px; }
.texttool { width: 79px; padding-left: 2px; }
.texttool .big, .search .big, .paper .big { height: 52px; }
.search { flex-direction: row; width: 123px; padding-left: 8px; gap: 0; }
.find { width: 60px; }
.find em, .choose em { align-self: flex-start; margin-left: 2px; }
.choose { width: 44px; margin-left: 6px; }
.paper { width: 66px; padding: 0 0 0 4px; }

/* Quick access and document tabs */
.docbar { display: flex; height: 26px; background: #fafafa; }
.quick { display: flex; align-items: center; width: 187px; padding-left: 2px; }
.quick button { width: 22px; height: 26px; }
.quick .more { width: 26px; }
.doctabs { display: flex; flex: 1; }
.tab { display: flex; align-items: center; gap: 5px; width: 201px; padding: 0 6px 0 5px; background: #efefef; }
.tab span { flex: 1; white-space: nowrap; }
.tab button { width: 10px; height: 16px; }
.home { width: 101px; }
.wide { width: 212px; }
.current { width: 200px; background: #dae4f1; border-bottom: 2px solid #7aa7dc; padding-top: 2px; }
.plus { width: 26px; }
.command { display: flex; align-items: center; gap: 4px; padding-right: 9px; }
.command a { display: flex; align-items: center; gap: 4px; }

/* Work area */
.work { display: flex; flex: 1; min-height: 0; background: #fff; }
.editor { flex: 1; min-width: 0; display: flex; flex-direction: column; }
.page { flex: 1; overflow: hidden; background: #fff; }
.cell text { font-size: 14px; font-weight: 700; text-anchor: middle; fill: #000; }
.cell.large text { font-size: 15px; }
.pointer text { font-size: 16px; text-anchor: middle; fill: #111; }
.pointer.large text { font-size: 18px; }
.hscroll { display: flex; align-items: center; height: 19px; background: #a9aab3; }
.hscroll button { width: 18px; height: 19px; }
.hscroll .track { flex: 1; padding: 0 18px 0 93px; }
.hscroll .thumb { display: flex; height: 13px; align-items: center; justify-content: center; gap: 3px; background: #cfd0d4; }
.hscroll .thumb b { width: 1px; height: 8px; background: #888; }
.tri { width: 5px; height: 9px; background: #fff; }
.tri.left { clip-path: polygon(100% 0, 100% 100%, 0 50%); }
.tri.right { clip-path: polygon(0 0, 0 100%, 100% 50%); }
.tri.up { width: 9px; height: 5px; clip-path: polygon(0 100%, 50% 0, 100% 100%); }
.tri.down { width: 9px; height: 5px; clip-path: polygon(0 0, 100% 0, 50% 100%); }
.tri.small { width: 3px; height: 5px; }
.vscroll { width: 20px; display: flex; flex-direction: column; align-items: center; gap: 10px; padding: 3px 0 24px; background: #a9aab3; }
.vscroll .track { flex: 1; width: 13px; padding-top: 53px; }
.vscroll .thumb { display: flex; flex-direction: column; align-items: center; justify-content: center; gap: 3px; height: 300px; background: #cfd0d4; }
.vscroll .thumb b { width: 7px; height: 1px; background: #888; }
.side { width: 41px; background: #eceef1; display: flex; flex-direction: column; }
.grip { height: 3px; width: 15px; margin: 14px auto 13px 11px; border: 1px solid #cdd2dd; border-width: 1px 0; }
.side button { flex: none; height: 50px; flex-direction: column; justify-content: flex-end; padding-bottom: 6px; gap: 2px; }
.side .active { background: #fff; }
.panel { width: 260px; background: #fff; border-top: 1px solid #dcdcdc; padding: 5px 10px 0 9px; }
.panel header { display: flex; justify-content: space-between; height: 18px; align-items: center; }
.panel header span { display: flex; align-items: center; }
.panel header div { display: flex; gap: 10px; margin-right: -3px; }
.ptabs { display: flex; gap: 14px; border-bottom: 1px solid #ddd; margin: 8px 0 0 1px; }
.ptabs a { display: flex; flex-direction: column; align-items: center; gap: 5px; padding: 0 4px 4px; min-width: 44px; }
.ptabs .active { color: #5181dc; border-bottom: 2px solid #5b8ee6; margin-bottom: -1px; }
.fill { padding: 16px 7px 0 3px; display: flex; flex-direction: column; }
.line { display: flex; align-items: center; height: 24px; }
.line > span, .line > b, .line > label { flex: 1; }
.heading { color: #3e7ed4; gap: 5px; margin-bottom: 3px; }
.swatch { width: 85px; height: 22px; background: #000; border: 1px solid #aaa; }
.radio { display: flex; align-items: center; gap: 6px; height: 25px; padding-left: 12px; }
.radio input { appearance: none; width: 13px; height: 13px; border: 1px solid #666; border-radius: 50%; background: #fff; }
.radio input:checked { background: radial-gradient(circle, #222 0 3px, #fff 4px); }
.fill hr { width: calc(100% - 12px); margin: 2px 0 22px 12px; border: 0; border-top: 1px solid #e5e5e5; }
.indent { padding-left: 12px; }
.color { margin-bottom: 11px; }
.picker { width: 65px; height: 24px; border: 1px solid #d0d0d0; background: #fff; }
.picker b { width: 46px; height: 16px; background: #000; }
.slider { display: flex; align-items: center; }
.range { position: relative; width: 74px; height: 16px; }
.range output { position: absolute; left: 2px; top: -8px; line-height: 16px; color: #888; }
.range input { appearance: none; display: block; width: 74px; height: 16px; background: linear-gradient(#999, #999) center / 100% 1px no-repeat; }
.range input::-webkit-slider-thumb { appearance: none; width: 9px; height: 9px; margin-top: 8px; background: #888; clip-path: polygon(50% 0, 100% 100%, 0 100%); }
.outline { gap: 5px; margin-top: 18px; }
.none { width: 85px; height: 22px; border: 1px solid #b5b5b5; border-radius: 2px; background: #fff; }
.edge { width: 7px; background: #dadadc; padding-top: 263px; }
.edge button { width: 7px; height: 100px; background: #3f79c9; }

/* Status bar */
.status { display: flex; height: 22px; background: #dedee0; align-items: center; padding-right: 320px; }
.info { display: flex; flex: 1; gap: 10px; padding: 1px 0 0 8px; }
.info span { display: flex; align-items: center; line-height: 14px; white-space: nowrap; }
.info .cut + span { margin-left: -4px; }
.info .cut { border-right: 1px solid #999; padding-right: 3px; }
.ok { width: 7px; height: 7px; background: #56ad34; margin-right: 4px; }
.views { display: flex; height: 22px; }
.views button { width: 37px; }
.views .on { background: #c9daf1; }

/* Taskbar */
.taskbar { position: relative; display: flex; justify-content: space-between; height: 40px; background: linear-gradient(90deg, #2f6e85, #3f869e 30%, #468da5 50%, #39718b 78%, #345f70); color: #fff; }
.sky { position: absolute; inset: 0; }
.apps, .tray { position: relative; display: flex; align-items: center; }
.apps button { width: 62px; height: 40px; }
.apps button:first-child { width: 50px; }
.apps .running { width: 158px; height: 38px; margin-left: 4px; padding: 0 8px; gap: 4px; justify-content: flex-start; border: 1px solid #dbe9ed; background: #ffffff60; }
.tray { gap: 8px; padding-right: 16px; }
.tray time { text-align: center; line-height: 18px; margin-left: 12px; }

/* Network speed widget */
.meter { position: absolute; left: 1156px; top: 69px; width: 103px; height: 39px; display: flex; align-items: center; justify-content: flex-end; gap: 4px; padding-right: 4px; border-radius: 20px; border: 1px solid #ccc; background: linear-gradient(#f8f8f8, #dcdcdc); box-shadow: 0 3px 6px #0006; }
.rates { display: grid; grid-template-columns: 14px 32px; line-height: 15px; font-size: 10px; align-items: center; color: #111; text-align: right; }
.ball { position: absolute; left: -25px; top: -6px; width: 49px; height: 49px; border: 2px solid #eee; border-radius: 50%; outline: 1px solid #aaa; background: radial-gradient(ellipse at 45% 12%, #ffffffb0 0, #ffffff00 22%), linear-gradient(#11764c 0 57%, #48c75f 58%); color: #fff; font-size: 14px; line-height: 43px; text-align: center; box-shadow: 0 3px 8px #0007; }

/* Update notice */
.notice { position: absolute; right: 1px; bottom: 40px; width: 314px; height: 130px; border: 1px solid #6c6c76; border-top: 3px solid #6786cb; background: #f8f8f8; color: #555; padding: 0 4px; }
.notice header { display: flex; align-items: center; height: 31px; padding-left: 2px; border-bottom: 1px solid #e2e2e2; color: #4379cb; }
.notice strong { font: 13px/18px "Liberation Sans", sans-serif; margin: 0 5px; }
.notice strong b { font-size: 14px; }
.notice ul { list-style: none; margin: 11px 0 0; padding: 0 0 0 25px; }
.notice li { display: flex; align-items: center; line-height: 20px; }
.notice li::before { content: ""; width: 4px; height: 4px; background: #7b92d2; margin-right: 10px; }
.notice samp, .notice .foot a { font: 10px/20px "Liberation Mono", monospace; }
.foot { display: flex; align-items: center; justify-content: space-between; padding: 0 16px 0 23px; height: 26px; }
.foot a { color: #234fa5; margin-left: 6px; }
.foot button { width: 67px; height: 22px; border: 1px solid #669b4c; background: linear-gradient(#91b977, #7bab5f); color: #fff; font-size: 13px; }
```
